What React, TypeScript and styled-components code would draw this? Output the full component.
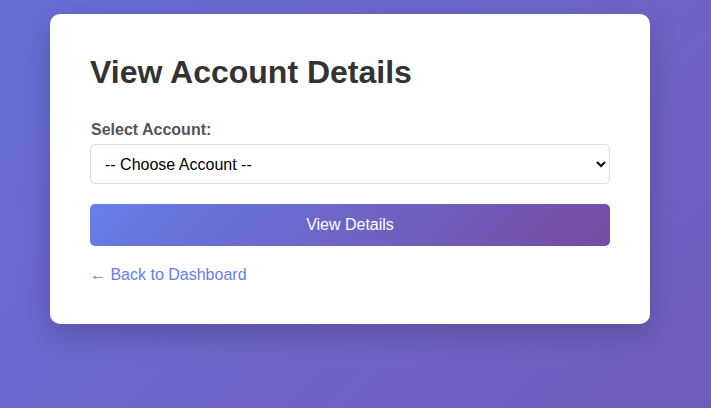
import React from 'react';
import styled, { createGlobalStyle } from 'styled-components';

const GlobalStyle = createGlobalStyle`
  * {
    box-sizing: border-box;
  }
  html, body {
    margin: 0;
    padding: 0;
  }
  body {
    min-height: 100vh;
    font-family: 'Liberation Sans', Arial, sans-serif;
    background: linear-gradient(135deg, #676dd6 0%, #6d66c9 50%, #725cbb 100%);
  }
`;

export default function App() {
  return (
    <>
      <GlobalStyle />
      <Page>
        <Card>
          <Title>View Account Details</Title>
          <form onSubmit={(e) => e.preventDefault()}>
            <Label htmlFor="account">Select Account:</Label>
            <Select id="account" defaultValue="">
              <option value="">-- Choose Account --</option>
            </Select>
            <SubmitButton type="submit">View Details</SubmitButton>
          </form>
          <BackLink href="#">← Back to Dashboard</BackLink>
        </Card>
      </Page>
    </>
  );
}

const Page = styled.div`
  min-height: 100vh;
  padding: 14px 0 0 50px;
`;

const Card = styled.div`
  width: 600px;
  padding: 40px;
  background-color: #fff;
  border-radius: 10px;
  box-shadow: 0 10px 30px rgba(0, 0, 0, 0.2);
`;

const Title = styled.h1`
  margin: 0 0 30px;
  font-size: 32px;
  font-weight: bold;
  color: #333;
`;

const Label = styled.label`
  display: block;
  margin-bottom: 5px;
  padding-left: 1px;
  font-size: 16px;
  font-weight: bold;
  color: #555;
`;

const Select = styled.select`
  display: block;
  width: 100%;
  height: 40px;
  padding: 0 10px;
  font-family: 'Liberation Sans', Arial, sans-serif;
  font-size: 16px;
  color: #000;
  background-color: #fff;
  border: 1px solid #ddd;
  border-radius: 5px;
`;

const SubmitButton = styled.button`
  display: block;
  width: 100%;
  padding: 12px 0;
  margin-top: 20px;
  font-family: 'Liberation Sans', Arial, sans-serif;
  font-size: 16px;
  line-height: normal;
  color: #fff;
  background: linear-gradient(135deg, #667eea 0%, #764ba2 100%);
  border: none;
  border-radius: 5px;
  cursor: pointer;
`;

const BackLink = styled.a`
  display: inline-block;
  margin-top: 20px;
  font-size: 16px;
  color: #667eea;
  text-decoration: none;
`;
